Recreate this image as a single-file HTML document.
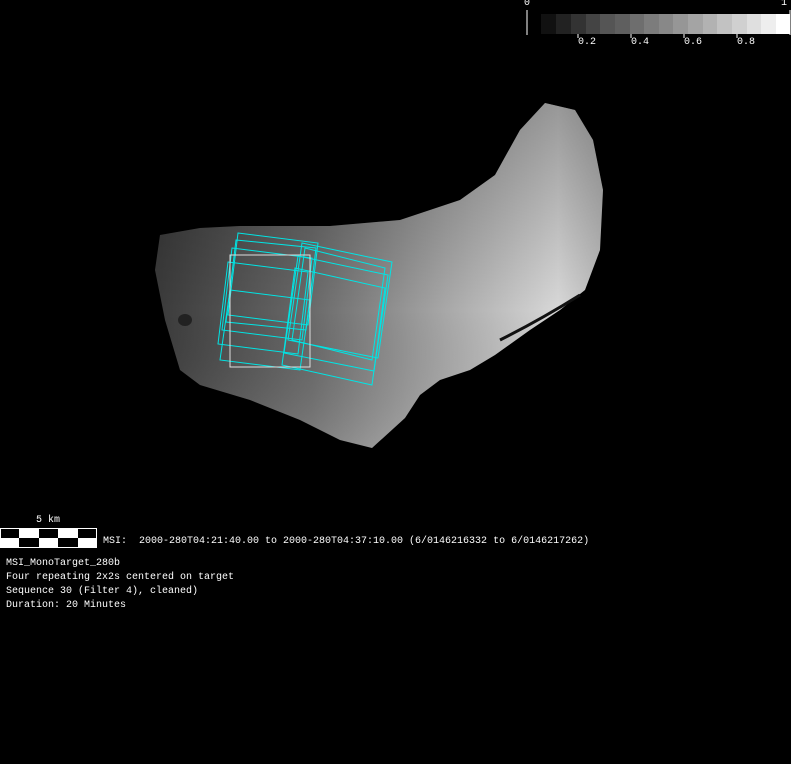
<!DOCTYPE html>
<html><head><style>
html,body{margin:0;padding:0;background:#000;}
body{width:791px;height:764px;position:relative;overflow:hidden;font-family:"Liberation Mono",monospace;color:#fff;}
.t{position:absolute;font-size:10px;white-space:pre;line-height:14px;}
</style></head><body>
<svg width="791" height="764" style="position:absolute;left:0;top:0">
<defs>
<linearGradient id="g" x1="0" y1="0" x2="1" y2="0">
<stop offset="0" stop-color="#3a3a3a"/><stop offset="0.35" stop-color="#6a6a6a"/>
<stop offset="0.65" stop-color="#a8a8a8"/><stop offset="0.9" stop-color="#d8d8d8"/><stop offset="1" stop-color="#bbb"/>
</linearGradient>
<linearGradient id="v" x1="0" y1="0" x2="0" y2="1">
<stop offset="0" stop-color="#000" stop-opacity="0.3"/><stop offset="0.6" stop-color="#000" stop-opacity="0"/><stop offset="1" stop-color="#fff" stop-opacity="0.15"/>
</linearGradient>
</defs>
<path d="M160,235 L200,228 L240,226 L330,226 L400,220 L460,200 L495,175 L520,130 L545,103 L575,110 L593,140 L603,190 L600,250 L585,290 L560,310 L530,330 L495,355 L470,370 L440,380 L420,395 L405,418 L372,448 L340,440 L300,420 L250,400 L200,385 L180,370 L165,320 L155,270 Z" fill="url(#g)"/>
<path d="M160,235 L200,228 L240,226 L330,226 L400,220 L460,200 L495,175 L520,130 L545,103 L575,110 L593,140 L603,190 L600,250 L585,290 L560,310 L530,330 L495,355 L470,370 L440,380 L420,395 L405,418 L372,448 L340,440 L300,420 L250,400 L200,385 L180,370 L165,320 L155,270 Z" fill="url(#v)"/>
<ellipse cx="185" cy="320" rx="7" ry="6" fill="#222"/>
<path d="M500,340 Q540,320 580,295" stroke="#111" stroke-width="3" fill="none"/>
<g stroke="#00e5e5" stroke-width="1" fill="none">
<polygon points="238,233 318,243 308,325 228,315"/>
<polygon points="232,248 312,258 302,340 222,330"/>
<polygon points="228,262 308,272 298,354 218,344"/>
<polygon points="236,240 316,248 306,330 226,322"/>
<polygon points="302,243 392,262 378,358 288,340"/>
<polygon points="298,256 388,275 374,371 284,353"/>
<polygon points="305,248 385,268 372,360 292,340"/>
<polygon points="295,268 385,288 372,385 282,365"/>
<polygon points="230,290 310,300 300,370 220,360"/>
</g>
<rect x="230" y="255" width="80" height="112" stroke="#ddd" fill="none" stroke-width="1"/>
<line x1="527" y1="10" x2="527" y2="35" stroke="#fff"/>
<line x1="790" y1="10" x2="790" y2="35" stroke="#fff"/>
<g>
<rect x="541" y="14" width="15" height="20" fill="#111"/><rect x="556" y="14" width="15" height="20" fill="#222"/>
<rect x="571" y="14" width="15" height="20" fill="#333"/><rect x="586" y="14" width="14" height="20" fill="#444"/>
<rect x="600" y="14" width="15" height="20" fill="#555"/><rect x="615" y="14" width="15" height="20" fill="#5f5f5f"/>
<rect x="630" y="14" width="14" height="20" fill="#6e6e6e"/><rect x="644" y="14" width="15" height="20" fill="#7c7c7c"/>
<rect x="659" y="14" width="14" height="20" fill="#888"/><rect x="673" y="14" width="15" height="20" fill="#969696"/>
<rect x="688" y="14" width="15" height="20" fill="#a4a4a4"/><rect x="703" y="14" width="14" height="20" fill="#b2b2b2"/>
<rect x="717" y="14" width="15" height="20" fill="#c2c2c2"/><rect x="732" y="14" width="15" height="20" fill="#d0d0d0"/>
<rect x="747" y="14" width="14" height="20" fill="#dfdfdf"/><rect x="761" y="14" width="15" height="20" fill="#eee"/>
<rect x="776" y="14" width="14" height="20" fill="#fff"/>
</g>
<g stroke="#fff"><line x1="578" y1="34" x2="578" y2="38"/><line x1="631" y1="34" x2="631" y2="38"/><line x1="684" y1="34" x2="684" y2="38"/><line x1="737" y1="34" x2="737" y2="38"/></g>
<rect x="0.5" y="528.5" width="96" height="19" fill="#fff" stroke="#fff"/>
<rect x="1" y="529" width="18" height="9" fill="#000"/><rect x="39" y="529" width="19" height="9" fill="#000"/><rect x="78" y="529" width="18" height="9" fill="#000"/>
<rect x="19" y="538" width="20" height="9" fill="#000"/><rect x="58" y="538" width="20" height="9" fill="#000"/>
</svg>
<div class="t" style="left:524px;top:-3px">0</div>
<div class="t" style="left:781px;top:-3px">1</div>
<div class="t" style="left:578px;top:36px">0.2</div>
<div class="t" style="left:631px;top:36px">0.4</div>
<div class="t" style="left:684px;top:36px">0.6</div>
<div class="t" style="left:737px;top:36px">0.8</div>
<div class="t" style="left:36px;top:514px">5 km</div>
<div class="t" style="left:103px;top:535px">MSI:  2000-280T04:21:40.00 to 2000-280T04:37:10.00 (6/0146216332 to 6/0146217262)</div>
<div class="t" style="left:6px;top:557px">MSI_MonoTarget_280b
Four repeating 2x2s centered on target
Sequence 30 (Filter 4), cleaned)
Duration: 20 Minutes</div>
</body></html>
